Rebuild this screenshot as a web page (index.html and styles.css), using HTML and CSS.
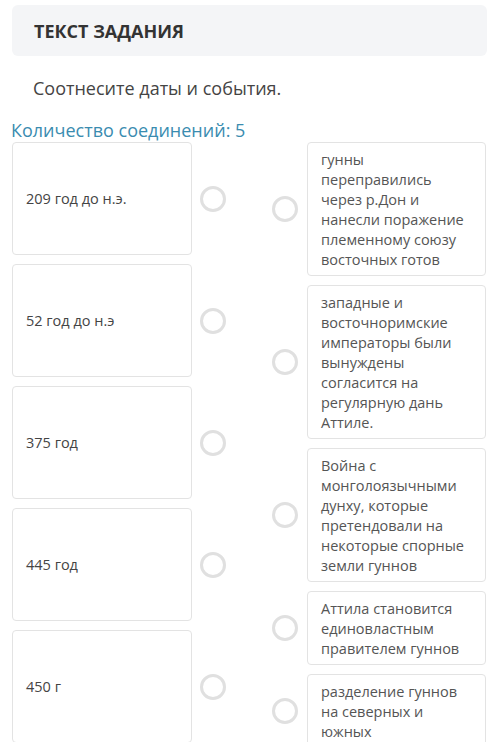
FILE: index.html
```html
<!DOCTYPE html>
<html lang="ru">
<head>
<meta charset="utf-8">
<link rel="stylesheet" href="styles.css">
</head>
<body>
<div class="task-head">ТЕКСТ ЗАДАНИЯ</div>
<p class="task-text">Соотнесите даты и события.</p>
<div class="count">Количество соединений: 5</div>
<div class="match">
  <div class="col-left">
    <div class="item-left"><div class="card-left">209 год до н.э.</div><span class="dot"></span></div>
    <div class="item-left"><div class="card-left">52 год до н.э</div><span class="dot"></span></div>
    <div class="item-left"><div class="card-left">375 год</div><span class="dot"></span></div>
    <div class="item-left"><div class="card-left">445 год</div><span class="dot"></span></div>
    <div class="item-left"><div class="card-left">450 г</div><span class="dot"></span></div>
  </div>
  <div class="col-right">
    <div class="item-right"><span class="dot"></span><div class="card-right">гунны переправились через р.Дон и нанесли поражение племенному союзу восточных готов</div></div>
    <div class="item-right"><span class="dot"></span><div class="card-right">западные и восточноримские императоры были вынуждены согласится на регулярную дань Аттиле.</div></div>
    <div class="item-right"><span class="dot"></span><div class="card-right">Война с монголоязычными дунху, которые претендовали на некоторые спорные земли гуннов</div></div>
    <div class="item-right"><span class="dot"></span><div class="card-right">Аттила становится единовластным правителем гуннов</div></div>
    <div class="item-right"><span class="dot"></span><div class="card-right">разделение гуннов на северных и южных</div></div>
  </div>
</div>
</body>
</html>
```
FILE: styles.css
```css
html, body {
  margin: 0;
  padding: 0;
  background: #fff;
  font-family: "Open Sans", "Noto Sans", sans-serif;
  color: #444;
}
.task-head {
  margin: 5px 13px 0 12px;
  height: 51px;
  box-sizing: border-box;
  padding-left: 22px;
  display: flex;
  align-items: center;
  background: #f4f5f7;
  border-radius: 6px;
  font-weight: 700;
  font-size: 18px;
  color: #333;
}
.task-text {
  margin: 20px 0 0 33px;
  font-size: 18px;
  line-height: 24px;
  color: #444;
}
.count {
  margin: 19px 0 0 11px;
  font-size: 18px;
  line-height: 22px;
  color: #3a8cb0;
}
.match {
  display: flex;
  align-items: flex-start;
  padding-left: 12px;
  margin-top: 1px;
}
.col-left, .col-right {
  display: flex;
  flex-direction: column;
  gap: 9px;
}
.col-right {
  margin-left: 46px;
}
.item-left {
  display: flex;
  align-items: center;
  gap: 8px;
}
.item-right {
  display: flex;
  align-items: center;
  gap: 9px;
}
.card-left {
  width: 180px;
  height: 113px;
  box-sizing: border-box;
  border: 1px solid #e3e3e3;
  border-radius: 4px;
  padding-left: 13px;
  display: flex;
  align-items: center;
  font-size: 14.5px;
  color: #444;
}
.card-right {
  width: 179px;
  box-sizing: border-box;
  border: 1px solid #e3e3e3;
  border-radius: 4px;
  padding: 7px 14px 5px 13px;
  font-size: 14.5px;
  line-height: 20px;
  color: #555;
}
.dot {
  width: 26px;
  height: 26px;
  box-sizing: border-box;
  border: 3px solid #e0e0e0;
  border-radius: 50%;
  flex: none;
}
```
